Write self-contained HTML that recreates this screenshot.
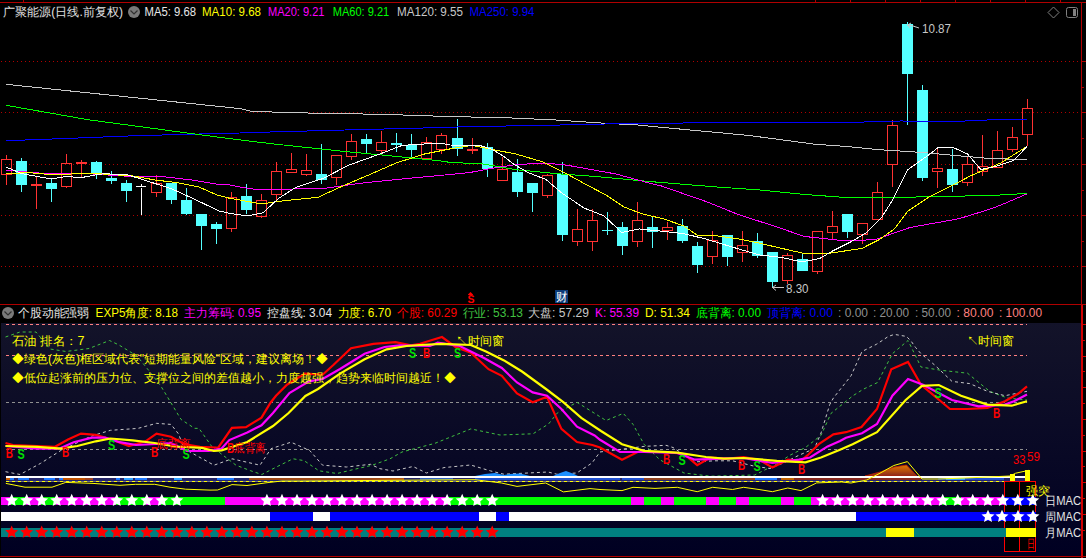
<!DOCTYPE html>
<html><head><meta charset="utf-8">
<style>
html,body{margin:0;padding:0;background:#000;}
body{width:1086px;height:558px;overflow:hidden;position:relative;}
svg{position:absolute;left:0;top:0;display:block;}
</style></head><body>
<svg width="1086" height="558" viewBox="0 0 1086 558">
<line x1="1" y1="61.5" x2="1080" y2="61.5" stroke="#b00000" stroke-width="1" stroke-dasharray="1,3"/>
<line x1="1" y1="112.5" x2="1080" y2="112.5" stroke="#b00000" stroke-width="1" stroke-dasharray="1,3"/>
<line x1="1" y1="164.5" x2="1080" y2="164.5" stroke="#b00000" stroke-width="1" stroke-dasharray="1,3"/>
<line x1="1" y1="215.5" x2="1080" y2="215.5" stroke="#b00000" stroke-width="1" stroke-dasharray="1,3"/>
<line x1="1" y1="266.5" x2="1080" y2="266.5" stroke="#b00000" stroke-width="1" stroke-dasharray="1,3"/>
<g shape-rendering="crispEdges">
<rect x="6" y="155" width="1" height="4" fill="#ff3232"/>
<rect x="6" y="174" width="1" height="11" fill="#ff3232"/>
<rect x="1.5" y="159.5" width="10" height="15" fill="none" stroke="#ff3232"/>
<rect x="21" y="158" width="1" height="34" fill="#54ffff"/>
<rect x="16" y="161" width="11" height="24" fill="#54ffff"/>
<rect x="36" y="176" width="1" height="8" fill="#ff3232"/>
<rect x="36" y="186" width="1" height="23" fill="#ff3232"/>
<rect x="31" y="184" width="11" height="2" fill="#ff3232"/>
<rect x="51" y="178" width="1" height="24" fill="#54ffff"/>
<rect x="46" y="183" width="11" height="6" fill="#54ffff"/>
<rect x="66" y="154" width="1" height="9" fill="#ff3232"/>
<rect x="66" y="186" width="1" height="2" fill="#ff3232"/>
<rect x="61.5" y="163.5" width="10" height="23" fill="none" stroke="#ff3232"/>
<rect x="81" y="160" width="1" height="2" fill="#ff3232"/>
<rect x="81" y="164" width="1" height="13" fill="#ff3232"/>
<rect x="76" y="162" width="11" height="2" fill="#ff3232"/>
<rect x="96" y="161" width="1" height="18" fill="#54ffff"/>
<rect x="91" y="162" width="11" height="11" fill="#54ffff"/>
<rect x="111" y="171" width="1" height="13" fill="#54ffff"/>
<rect x="106" y="178" width="11" height="3" fill="#54ffff"/>
<rect x="126" y="180" width="1" height="22" fill="#54ffff"/>
<rect x="121" y="183" width="11" height="8" fill="#54ffff"/>
<rect x="141" y="184" width="1" height="2" fill="#ffffff"/>
<rect x="141" y="188" width="1" height="27" fill="#ffffff"/>
<rect x="136" y="186" width="10" height="1" fill="#ffffff"/>
<rect x="156" y="175" width="1" height="8" fill="#ff3232"/>
<rect x="156" y="192" width="1" height="5" fill="#ff3232"/>
<rect x="151.5" y="183.5" width="10" height="9" fill="none" stroke="#ff3232"/>
<rect x="171" y="183" width="1" height="21" fill="#54ffff"/>
<rect x="166" y="183" width="11" height="17" fill="#54ffff"/>
<rect x="186" y="188" width="1" height="27" fill="#54ffff"/>
<rect x="181" y="200" width="11" height="14" fill="#54ffff"/>
<rect x="201" y="214" width="1" height="36" fill="#54ffff"/>
<rect x="196" y="214" width="11" height="12" fill="#54ffff"/>
<rect x="216" y="222" width="1" height="22" fill="#54ffff"/>
<rect x="211" y="224" width="11" height="5" fill="#54ffff"/>
<rect x="231" y="192" width="1" height="5" fill="#ff3232"/>
<rect x="231" y="228" width="1" height="4" fill="#ff3232"/>
<rect x="226.5" y="197.5" width="10" height="31" fill="none" stroke="#ff3232"/>
<rect x="246" y="184" width="1" height="30" fill="#54ffff"/>
<rect x="241" y="196" width="11" height="14" fill="#54ffff"/>
<rect x="261" y="194" width="1" height="6" fill="#ff3232"/>
<rect x="261" y="216" width="1" height="2" fill="#ff3232"/>
<rect x="256.5" y="200.5" width="10" height="16" fill="none" stroke="#ff3232"/>
<rect x="276" y="162" width="1" height="9" fill="#ff3232"/>
<rect x="276" y="194" width="1" height="8" fill="#ff3232"/>
<rect x="271.5" y="171.5" width="10" height="23" fill="none" stroke="#ff3232"/>
<rect x="291" y="153" width="1" height="16" fill="#ff3232"/>
<rect x="291" y="172" width="1" height="1" fill="#ff3232"/>
<rect x="286.5" y="169.5" width="10" height="3" fill="none" stroke="#ff3232"/>
<rect x="306" y="154" width="1" height="16" fill="#ff3232"/>
<rect x="306" y="174" width="1" height="2" fill="#ff3232"/>
<rect x="301.5" y="170.5" width="10" height="4" fill="none" stroke="#ff3232"/>
<rect x="321" y="144" width="1" height="40" fill="#54ffff"/>
<rect x="316" y="174" width="11" height="6" fill="#54ffff"/>
<rect x="336" y="155" width="1" height="1" fill="#ff3232"/>
<rect x="336" y="177" width="1" height="8" fill="#ff3232"/>
<rect x="331.5" y="155.5" width="10" height="22" fill="none" stroke="#ff3232"/>
<rect x="351" y="134" width="1" height="7" fill="#ff3232"/>
<rect x="351" y="156" width="1" height="4" fill="#ff3232"/>
<rect x="346.5" y="141.5" width="10" height="15" fill="none" stroke="#ff3232"/>
<rect x="366" y="134" width="1" height="19" fill="#54ffff"/>
<rect x="361" y="139" width="11" height="5" fill="#54ffff"/>
<rect x="381" y="131" width="1" height="11" fill="#ff3232"/>
<rect x="381" y="150" width="1" height="4" fill="#ff3232"/>
<rect x="376.5" y="142.5" width="10" height="8" fill="none" stroke="#ff3232"/>
<rect x="396" y="133" width="1" height="19" fill="#54ffff"/>
<rect x="391" y="143" width="11" height="2" fill="#54ffff"/>
<rect x="411" y="134" width="1" height="24" fill="#54ffff"/>
<rect x="406" y="145" width="11" height="5" fill="#54ffff"/>
<rect x="426" y="137" width="1" height="5" fill="#ff3232"/>
<rect x="426" y="158" width="1" height="1" fill="#ff3232"/>
<rect x="421.5" y="142.5" width="10" height="16" fill="none" stroke="#ff3232"/>
<rect x="441" y="133" width="1" height="2" fill="#ff3232"/>
<rect x="441" y="149" width="1" height="5" fill="#ff3232"/>
<rect x="436.5" y="135.5" width="10" height="14" fill="none" stroke="#ff3232"/>
<rect x="457" y="119" width="1" height="37" fill="#54ffff"/>
<rect x="452" y="138" width="11" height="11" fill="#54ffff"/>
<rect x="472" y="138" width="1" height="11" fill="#ff3232"/>
<rect x="472" y="151" width="1" height="3" fill="#ff3232"/>
<rect x="467" y="149" width="11" height="2" fill="#ff3232"/>
<rect x="487" y="143" width="1" height="34" fill="#54ffff"/>
<rect x="482" y="147" width="11" height="22" fill="#54ffff"/>
<rect x="502" y="157" width="1" height="12" fill="#ff3232"/>
<rect x="502" y="180" width="1" height="1" fill="#ff3232"/>
<rect x="497.5" y="169.5" width="10" height="11" fill="none" stroke="#ff3232"/>
<rect x="517" y="159" width="1" height="38" fill="#54ffff"/>
<rect x="512" y="172" width="11" height="20" fill="#54ffff"/>
<rect x="532" y="183" width="1" height="29" fill="#54ffff"/>
<rect x="527" y="183" width="11" height="10" fill="#54ffff"/>
<rect x="547" y="174" width="1" height="1" fill="#ff3232"/>
<rect x="547" y="195" width="1" height="3" fill="#ff3232"/>
<rect x="542.5" y="175.5" width="10" height="20" fill="none" stroke="#ff3232"/>
<rect x="562" y="162" width="1" height="79" fill="#54ffff"/>
<rect x="557" y="174" width="11" height="61" fill="#54ffff"/>
<rect x="577" y="209" width="1" height="20" fill="#ff3232"/>
<rect x="577" y="241" width="1" height="5" fill="#ff3232"/>
<rect x="572.5" y="229.5" width="10" height="12" fill="none" stroke="#ff3232"/>
<rect x="592" y="209" width="1" height="11" fill="#ff3232"/>
<rect x="592" y="241" width="1" height="10" fill="#ff3232"/>
<rect x="587.5" y="220.5" width="10" height="21" fill="none" stroke="#ff3232"/>
<rect x="607" y="212" width="1" height="23" fill="#54ffff"/>
<rect x="602" y="230" width="11" height="1" fill="#54ffff"/>
<rect x="622" y="222" width="1" height="33" fill="#54ffff"/>
<rect x="617" y="227" width="11" height="19" fill="#54ffff"/>
<rect x="637" y="202" width="1" height="18" fill="#ff3232"/>
<rect x="637" y="241" width="1" height="6" fill="#ff3232"/>
<rect x="632.5" y="220.5" width="10" height="21" fill="none" stroke="#ff3232"/>
<rect x="652" y="217" width="1" height="31" fill="#54ffff"/>
<rect x="647" y="227" width="11" height="5" fill="#54ffff"/>
<rect x="667" y="222" width="1" height="5" fill="#ff3232"/>
<rect x="667" y="230" width="1" height="10" fill="#ff3232"/>
<rect x="662.5" y="227.5" width="10" height="3" fill="none" stroke="#ff3232"/>
<rect x="682" y="219" width="1" height="24" fill="#54ffff"/>
<rect x="677" y="226" width="11" height="15" fill="#54ffff"/>
<rect x="697" y="242" width="1" height="31" fill="#54ffff"/>
<rect x="692" y="246" width="11" height="19" fill="#54ffff"/>
<rect x="712" y="231" width="1" height="9" fill="#ff3232"/>
<rect x="712" y="256" width="1" height="8" fill="#ff3232"/>
<rect x="707.5" y="240.5" width="10" height="16" fill="none" stroke="#ff3232"/>
<rect x="727" y="235" width="1" height="31" fill="#54ffff"/>
<rect x="722" y="235" width="11" height="22" fill="#54ffff"/>
<rect x="742" y="231" width="1" height="14" fill="#ff3232"/>
<rect x="742" y="252" width="1" height="10" fill="#ff3232"/>
<rect x="737.5" y="245.5" width="10" height="7" fill="none" stroke="#ff3232"/>
<rect x="757" y="233" width="1" height="25" fill="#54ffff"/>
<rect x="752" y="241" width="11" height="15" fill="#54ffff"/>
<rect x="772" y="252" width="1" height="35" fill="#54ffff"/>
<rect x="767" y="252" width="11" height="30" fill="#54ffff"/>
<rect x="787" y="253" width="1" height="2" fill="#ff3232"/>
<rect x="787" y="280" width="1" height="4" fill="#ff3232"/>
<rect x="782.5" y="255.5" width="10" height="25" fill="none" stroke="#ff3232"/>
<rect x="802" y="253" width="1" height="18" fill="#54ffff"/>
<rect x="797" y="259" width="11" height="12" fill="#54ffff"/>
<rect x="817" y="231" width="1" height="1" fill="#ff3232"/>
<rect x="817" y="271" width="1" height="3" fill="#ff3232"/>
<rect x="812.5" y="231.5" width="10" height="40" fill="none" stroke="#ff3232"/>
<rect x="832" y="211" width="1" height="15" fill="#ff3232"/>
<rect x="832" y="232" width="1" height="7" fill="#ff3232"/>
<rect x="827.5" y="226.5" width="10" height="6" fill="none" stroke="#ff3232"/>
<rect x="847" y="214" width="1" height="24" fill="#54ffff"/>
<rect x="842" y="214" width="11" height="18" fill="#54ffff"/>
<rect x="862" y="223" width="1" height="1" fill="#ff3232"/>
<rect x="862" y="234" width="1" height="10" fill="#ff3232"/>
<rect x="857.5" y="223.5" width="10" height="11" fill="none" stroke="#ff3232"/>
<rect x="877" y="182" width="1" height="10" fill="#ff3232"/>
<rect x="877" y="219" width="1" height="1" fill="#ff3232"/>
<rect x="872.5" y="192.5" width="10" height="27" fill="none" stroke="#ff3232"/>
<rect x="892" y="120" width="1" height="5" fill="#ff3232"/>
<rect x="892" y="164" width="1" height="23" fill="#ff3232"/>
<rect x="887.5" y="125.5" width="10" height="39" fill="none" stroke="#ff3232"/>
<rect x="907" y="22" width="1" height="103" fill="#54ffff"/>
<rect x="902" y="24" width="11" height="50" fill="#54ffff"/>
<rect x="922" y="85" width="1" height="96" fill="#54ffff"/>
<rect x="917" y="90" width="11" height="88" fill="#54ffff"/>
<rect x="937" y="148" width="1" height="20" fill="#ff3232"/>
<rect x="937" y="171" width="1" height="17" fill="#ff3232"/>
<rect x="932.5" y="168.5" width="10" height="3" fill="none" stroke="#ff3232"/>
<rect x="952" y="149" width="1" height="43" fill="#54ffff"/>
<rect x="947" y="169" width="11" height="16" fill="#54ffff"/>
<rect x="967" y="156" width="1" height="8" fill="#ff3232"/>
<rect x="967" y="182" width="1" height="4" fill="#ff3232"/>
<rect x="962.5" y="164.5" width="10" height="18" fill="none" stroke="#ff3232"/>
<rect x="982" y="135" width="1" height="31" fill="#ff3232"/>
<rect x="982" y="171" width="1" height="5" fill="#ff3232"/>
<rect x="977.5" y="166.5" width="10" height="5" fill="none" stroke="#ff3232"/>
<rect x="997" y="131" width="1" height="19" fill="#ff3232"/>
<rect x="997" y="167" width="1" height="1" fill="#ff3232"/>
<rect x="992.5" y="150.5" width="10" height="17" fill="none" stroke="#ff3232"/>
<rect x="1012" y="127" width="1" height="10" fill="#ff3232"/>
<rect x="1012" y="149" width="1" height="3" fill="#ff3232"/>
<rect x="1007.5" y="137.5" width="10" height="12" fill="none" stroke="#ff3232"/>
<rect x="1027" y="99" width="1" height="9" fill="#ff3232"/>
<rect x="1027" y="134" width="1" height="12" fill="#ff3232"/>
<rect x="1022.5" y="108.5" width="10" height="26" fill="none" stroke="#ff3232"/>
</g>
<g fill="none" stroke-width="1" shape-rendering="crispEdges">
<polyline points="6.0,84.3 240.0,108.6 250.0,111.0 285.0,112.6 385.0,114.4 451.0,116.6 505.0,117.7 556.0,120.0 605.0,123.3 638.0,125.0 660.0,127.2 748.4,135.4 814.7,144.2 846.0,146.4 879.0,149.7 923.0,152.5 956.5,155.6 989.6,158.5 1027.0,159.6" stroke="#c8c8c8"/>
<polyline points="6.0,140.7 66.0,138.5 132.6,135.8 199.0,134.0 240.0,133.0 270.0,132.0 345.0,130.0 435.0,127.7 470.0,126.6 538.0,125.5 605.0,124.0 660.0,123.2 792.6,122.1 846.0,122.5 901.0,121.0 956.5,121.4 1005.0,119.2 1027.0,119.2" stroke="#0000ff"/>
<polyline points="6.0,105.3 88.0,119.7 230.0,138.7 274.0,144.0 340.0,151.0 396.0,156.4 440.0,160.8 450.0,162.4 483.0,164.0 516.0,169.7 560.5,174.0 593.6,176.3 650.5,181.6 717.0,187.0 760.0,190.0 780.0,192.0 804.0,194.4 848.0,197.7 901.0,197.7 923.0,196.7 989.6,195.6 1027.0,193.4" stroke="#00ff00"/>
<polyline points="6.0,170.0 33.0,172.6 55.0,174.0 88.0,173.7 133.0,176.6 166.0,177.0 192.0,180.0 221.0,184.8 230.0,185.0 240.0,187.0 256.5,189.6 323.0,188.5 362.6,183.0 407.0,178.5 450.0,174.5 470.0,172.5 490.0,168.6 516.0,164.6 545.0,163.0 567.0,165.2 616.0,174.0 649.0,183.0 661.5,186.0 690.0,196.0 706.0,201.5 739.0,214.8 760.0,221.5 780.0,228.0 804.0,236.4 844.0,240.8 875.0,239.7 910.0,227.5 959.0,218.7 989.6,209.3 1000.0,205.4 1027.0,193.9" stroke="#ff00ff"/>
<polyline points="6.0,173.7 29.0,172.6 55.0,175.0 88.0,173.0 133.0,176.0 155.0,180.0 177.0,182.6 199.0,187.0 217.0,195.0 230.0,198.4 240.0,200.0 261.0,204.0 285.0,200.6 318.0,197.3 340.5,187.0 371.0,174.0 396.0,163.0 424.5,154.0 451.0,148.7 472.0,145.4 494.0,149.8 516.0,154.0 543.0,162.0 567.0,174.0 587.0,185.0 606.0,195.0 624.0,207.0 641.7,213.7 663.8,219.0 683.6,225.8 697.0,235.0 716.8,235.8 739.0,239.0 761.0,243.5 780.0,248.0 802.0,253.0 824.0,254.0 861.7,248.5 879.0,239.7 894.8,228.6 908.0,211.0 928.0,197.7 959.0,182.0 969.8,176.2 1000.7,163.0 1027.0,146.4" stroke="#ffff00"/>
<polyline points="6.0,167.0 22.0,173.7 51.0,179.0 66.0,176.6 82.0,177.5 95.0,175.0 104.0,173.7 128.0,175.0 141.0,179.0 159.0,184.8 172.0,189.0 192.0,198.0 219.0,211.0 230.0,213.4 247.7,216.0 263.0,212.8 278.6,198.4 296.0,187.3 323.0,178.5 349.0,165.0 380.0,154.0 402.0,145.4 440.0,143.0 450.0,145.0 472.0,145.5 481.5,146.0 492.0,149.4 503.0,155.8 514.0,164.4 529.0,173.0 546.0,179.5 561.0,192.4 584.0,208.0 604.0,215.9 621.8,232.5 639.4,229.0 663.8,231.4 683.6,233.6 705.7,239.0 727.8,245.7 750.0,252.3 760.0,255.0 780.0,257.2 802.0,261.8 819.7,258.5 833.0,250.7 850.6,242.0 866.0,233.0 881.5,217.6 892.6,200.0 907.9,169.6 930.0,154.0 938.8,147.0 952.0,147.0 967.5,154.0 980.8,169.6 996.3,166.2 1014.0,160.3 1027.0,146.4" stroke="#ffffff"/>
</g>
<defs><linearGradient id="bg" x1="0" y1="0" x2="0" y2="1"><stop offset="0" stop-color="#131329"/><stop offset="1" stop-color="#000022"/></linearGradient></defs>
<rect x="1" y="323" width="1080" height="233" fill="url(#bg)"/>
<line x1="6" y1="324.5" x2="1027" y2="324.5" stroke="#ff8080" stroke-dasharray="3,3"/>
<line x1="6" y1="355.5" x2="1027" y2="355.5" stroke="#ff8080" stroke-dasharray="3,3"/>
<line x1="6" y1="402.5" x2="1027" y2="402.5" stroke="#909090" stroke-dasharray="3,3"/>
<line x1="6" y1="449.5" x2="1027" y2="449.5" stroke="#909090" stroke-dasharray="3,3"/>
<polyline points="5.5,337.0 20.0,332.0 36.0,332.0 50.0,349.0 66.0,351.5 89.0,348.5 109.5,340.5 119.0,345.0 137.0,356.0 150.0,372.0 161.0,386.3 181.0,419.4 194.5,428.3 199.0,428.4 212.0,446.8 236.0,465.2 250.8,470.8 261.8,474.5 280.0,465.2 293.0,458.8 304.0,460.6 319.0,470.8 337.0,473.5 355.7,469.0 372.3,465.2 390.0,458.8 402.0,452.0 435.0,443.3 470.8,428.9 500.0,435.0 533.0,433.8 548.6,423.9 557.5,412.8 577.0,402.3 606.0,420.5 623.3,413.4 633.0,424.3 644.0,444.2 659.7,459.7 684.0,473.0 710.5,476.2 754.7,475.0 776.8,464.0 790.0,455.2 805.5,447.5 821.0,435.4 831.0,413.4 853.0,395.7 863.7,389.0 877.6,382.5 892.4,353.7 908.0,340.5 921.0,367.0 941.0,370.3 967.5,373.2 989.6,391.3 1007.3,398.0 1027.0,400.0" fill="none" stroke="#40c040" stroke-dasharray="3,3"/>
<polyline points="5.5,471.7 20.0,474.5 40.5,463.4 60.8,450.5 92.0,435.8 110.5,430.3 138.0,428.4 156.5,423.3 171.0,424.4 178.6,434.0 184.0,448.7 195.5,455.0 214.0,465.2 232.0,458.8 260.0,465.2 271.0,448.7 291.0,442.2 309.7,450.5 322.6,465.2 346.5,467.0 370.5,464.3 380.0,468.7 393.0,471.0 413.0,466.5 426.4,473.0 444.0,467.6 470.6,465.0 490.5,470.9 503.8,474.2 548.0,472.0 556.8,474.2 576.7,473.0 592.0,463.0 600.0,452.0 644.0,446.4 666.0,445.3 673.0,447.5 695.0,461.9 715.0,460.8 732.6,460.8 754.7,466.3 770.0,468.5 783.4,463.0 799.0,455.2 814.4,448.6 821.0,433.0 829.8,404.4 833.4,398.0 851.0,375.8 862.0,351.5 876.4,344.3 882.4,340.4 888.4,336.4 894.4,334.4 906.4,336.4 911.0,341.0 915.6,347.5 921.0,353.7 934.4,364.8 952.0,381.4 969.8,383.6 987.4,391.3 1005.0,395.7 1027.0,391.3" fill="none" stroke="#c8c8c8" stroke-dasharray="3,3"/>
<defs><linearGradient id="og" x1="0" y1="0" x2="0" y2="1"><stop offset="0" stop-color="#e07800"/><stop offset="0.6" stop-color="#b04810"/><stop offset="1" stop-color="#882820"/></linearGradient></defs>
<polygon points="865,476 880,472 894,467 906.5,465 917,476" fill="url(#og)" stroke="#c02000" stroke-width="0.8"/>
<polygon points="475,476 485,474 495,473 504,475 510,474 520,473.5 530,476" fill="#1e90ff"/>
<polygon points="553,476 560,473 566,471 574,474 578,476" fill="#1e90ff"/>
<rect x="6" y="476" width="1020" height="2" fill="#ffffff"/>
<rect x="6" y="478" width="1020" height="3" fill="#242468"/>
<rect x="6" y="481" width="1020" height="1" fill="#707090"/>
<rect x="6" y="478" width="4" height="2" fill="#c85a00"/>
<rect x="10" y="478" width="4" height="2" fill="#1e78ff"/>
<rect x="18" y="478" width="11" height="2" fill="#1e78ff"/>
<rect x="44" y="478" width="11" height="2" fill="#1e78ff"/>
<rect x="59" y="478" width="4" height="2" fill="#1e78ff"/>
<rect x="63" y="478" width="22" height="2" fill="#c05000"/>
<rect x="85" y="478" width="8" height="2" fill="#a04020"/>
<rect x="116" y="478" width="4" height="2" fill="#1e78ff"/>
<rect x="124" y="478" width="9" height="2" fill="#30a0ff"/>
<rect x="135" y="478" width="12" height="2" fill="#1e78ff"/>
<rect x="174" y="478" width="8" height="2" fill="#30a0ff"/>
<rect x="217" y="478" width="17" height="2" fill="#1e78ff"/>
<rect x="249" y="478" width="131" height="2" fill="#a04818"/>
<rect x="380" y="478" width="24" height="2" fill="#b05010"/>
<rect x="420" y="478" width="33" height="2" fill="#3060c0"/>
<rect x="475" y="478" width="145" height="2" fill="#2050d0"/>
<rect x="622" y="478" width="22" height="2" fill="#2050d0"/>
<rect x="644" y="478" width="111" height="2" fill="#904020"/>
<rect x="755" y="478" width="22" height="2" fill="#1e78ff"/>
<rect x="781" y="478" width="13" height="2" fill="#c06000"/>
<rect x="794" y="478" width="127" height="2" fill="#882820"/>
<rect x="938" y="478" width="66" height="2" fill="#2050d0"/>
<rect x="946" y="478" width="19" height="2" fill="#30a0ff"/>
<line x1="6" y1="481.5" x2="1027" y2="481.5" stroke="#ffff00" stroke-dasharray="3,3"/>
<polyline points="5.8,483.4 25.0,487.2 52.0,487.2 65.8,482.4 93.0,483.4 120.0,485.3 135.4,484.3 154.7,484.3 170.0,487.2 185.7,489.2 210.0,490.1 217.6,490.0 232.0,484.6 247.0,485.5 267.0,482.7 282.0,481.0 300.5,481.0 475.0,479.7 501.5,483.0 517.0,486.4 545.7,483.0 563.4,491.9 590.0,488.6 600.0,489.5 622.0,490.6 633.0,487.3 655.0,488.4 677.3,487.3 697.2,491.7 712.7,487.3 732.6,489.5 743.6,487.3 759.0,489.5 772.4,491.7 787.8,488.0 801.0,490.6 816.6,482.9 841.6,482.0 851.0,483.0 866.8,480.0 880.0,473.2 893.8,465.5 907.4,461.6 922.0,479.0 938.3,479.0 965.4,478.0 1010.0,476.0 1015.7,473.2 1029.0,470.3" fill="none" stroke="#ffff00"/>
<rect x="1010" y="474" width="5" height="7" fill="#ffff00"/>
<rect x="1025" y="470" width="5" height="11" fill="#ffff00"/>
<polyline points="5.5,443.0 13.0,445.0 55.0,446.8 68.0,439.5 81.0,433.6 95.8,434.9 114.0,440.4 129.0,446.0 145.5,441.3 156.5,433.6 171.0,436.7 184.0,444.0 200.0,446.8 216.0,447.5 218.0,448.0 231.9,427.9 246.0,427.2 261.5,417.6 270.5,402.7 276.0,395.7 287.0,384.7 305.0,373.6 322.6,374.7 333.6,364.8 351.0,348.2 373.4,343.8 395.5,342.2 411.0,345.3 420.0,343.8 442.0,337.0 455.4,347.0 470.8,352.6 488.5,369.2 501.8,375.8 517.0,393.5 532.7,402.3 547.0,396.8 561.4,428.9 577.0,442.0 592.4,445.0 600.0,447.5 622.0,459.7 637.6,452.0 666.0,452.0 684.0,454.0 697.2,465.2 710.5,457.5 728.0,458.6 743.6,457.0 759.0,459.7 772.4,467.4 787.8,459.7 801.0,460.8 807.7,455.2 818.8,444.2 833.4,434.4 846.0,432.2 861.5,427.0 877.0,409.0 891.3,369.2 908.0,362.0 921.0,384.7 950.0,409.0 967.5,409.0 987.4,407.9 1005.0,401.2 1018.4,393.5 1027.0,386.4" fill="none" stroke="#ff0000" stroke-width="2.2" stroke-linejoin="miter"/>
<polyline points="5.5,446.0 37.0,448.7 59.0,448.7 73.7,442.2 92.0,437.6 105.0,437.6 119.7,442.2 136.0,445.0 156.5,444.0 171.0,443.0 186.8,451.0 208.7,451.0 221.6,448.5 229.3,440.1 247.3,432.4 261.5,425.3 273.0,413.0 289.4,393.0 309.0,381.4 322.6,379.0 340.0,369.0 364.6,353.7 384.5,347.0 400.0,345.3 430.0,346.0 437.7,342.7 459.8,346.0 484.0,358.0 501.8,368.0 517.0,382.5 532.7,392.4 547.0,395.7 561.4,409.0 577.0,426.7 594.6,435.5 600.0,439.8 620.0,452.0 644.0,452.0 677.3,453.0 695.0,459.7 721.5,458.6 743.6,458.0 772.4,463.0 799.0,459.7 810.0,457.5 827.6,446.4 840.0,441.0 846.0,437.7 862.0,433.3 877.0,424.0 892.4,395.7 908.0,379.0 923.0,384.7 952.0,400.0 978.6,406.3 1005.0,404.6 1014.0,401.2 1027.0,394.6" fill="none" stroke="#ff00ff" stroke-width="2.2" stroke-linejoin="miter"/>
<polyline points="5.5,446.0 37.0,446.8 60.8,448.7 77.3,446.0 95.8,441.3 110.5,438.5 132.6,440.4 154.7,443.0 175.0,446.5 202.0,447.9 213.8,451.0 221.6,450.4 247.3,442.0 273.0,426.0 288.6,413.0 305.4,396.0 318.0,389.0 340.0,373.6 364.6,359.3 386.7,349.3 406.6,346.0 420.0,345.0 442.0,343.8 470.8,345.0 486.0,351.5 504.0,360.4 522.0,371.5 546.0,389.0 563.6,402.3 581.3,417.8 601.0,431.0 622.0,444.2 644.0,450.8 677.3,452.6 706.0,457.0 723.8,458.6 743.6,458.0 776.8,460.8 805.5,462.3 821.0,457.5 840.0,449.7 852.6,444.3 877.0,432.2 905.7,400.0 922.0,385.8 938.8,385.0 961.0,395.7 987.4,404.6 1011.7,405.7 1027.0,401.2" fill="none" stroke="#ffff00" stroke-width="2.2" stroke-linejoin="miter"/>
<rect x="1004" y="481" width="32" height="71" fill="#000000"/>
<rect x="1004.5" y="481.5" width="31" height="70" fill="none" stroke="#ff0000"/>
<rect x="1019" y="481" width="1" height="71" fill="#ff0000"/>
<rect x="1" y="497" width="1003" height="8" fill="#ff00ff"/>
<rect x="11" y="497" width="15" height="8" fill="#00ff00"/>
<rect x="41" y="497" width="15" height="8" fill="#00ff00"/>
<rect x="116" y="497" width="30" height="8" fill="#00ff00"/>
<rect x="161" y="497" width="64" height="8" fill="#00ff00"/>
<rect x="448" y="497" width="183" height="8" fill="#00ff00"/>
<rect x="644" y="497" width="17" height="8" fill="#00ff00"/>
<rect x="674" y="497" width="32" height="8" fill="#00ff00"/>
<rect x="719" y="497" width="17" height="8" fill="#00ff00"/>
<rect x="749" y="497" width="32" height="8" fill="#00ff00"/>
<rect x="794" y="497" width="17" height="8" fill="#00ff00"/>
<rect x="942" y="497" width="19" height="8" fill="#00ff00"/>
<rect x="1004" y="497" width="32" height="8" fill="#0000ff"/>
<polygon points="11.7,493.8 13.5,498.0 18.1,498.5 14.7,501.6 15.6,506.1 11.7,503.8 7.7,506.1 8.6,501.6 5.2,498.5 9.8,498.0" fill="#ffffff"/>
<polygon points="26.7,493.8 28.5,498.0 33.1,498.5 29.7,501.6 30.7,506.1 26.7,503.8 22.7,506.1 23.6,501.6 20.2,498.5 24.8,498.0" fill="#ffffff"/>
<polygon points="41.7,493.8 43.6,498.0 48.2,498.5 44.7,501.6 45.7,506.1 41.7,503.8 37.7,506.1 38.6,501.6 35.2,498.5 39.8,498.0" fill="#ffffff"/>
<polygon points="56.7,493.8 58.6,498.0 63.2,498.5 59.7,501.6 60.7,506.1 56.7,503.8 52.7,506.1 53.7,501.6 50.2,498.5 54.8,498.0" fill="#ffffff"/>
<polygon points="71.7,493.8 73.6,498.0 78.2,498.5 74.8,501.6 75.7,506.1 71.7,503.8 67.7,506.1 68.7,501.6 65.3,498.5 69.8,498.0" fill="#ffffff"/>
<polygon points="86.7,493.8 88.6,498.0 93.2,498.5 89.8,501.6 90.7,506.1 86.7,503.8 82.7,506.1 83.7,501.6 80.3,498.5 84.9,498.0" fill="#ffffff"/>
<polygon points="101.8,493.8 103.6,498.0 108.2,498.5 104.8,501.6 105.7,506.1 101.8,503.8 97.8,506.1 98.7,501.6 95.3,498.5 99.9,498.0" fill="#ffffff"/>
<polygon points="116.8,493.8 118.6,498.0 123.2,498.5 119.8,501.6 120.8,506.1 116.8,503.8 112.8,506.1 113.7,501.6 110.3,498.5 114.9,498.0" fill="#ffffff"/>
<polygon points="131.8,493.8 133.7,498.0 138.3,498.5 134.8,501.6 135.8,506.1 131.8,503.8 127.8,506.1 128.7,501.6 125.3,498.5 129.9,498.0" fill="#ffffff"/>
<polygon points="146.8,493.8 148.7,498.0 153.3,498.5 149.8,501.6 150.8,506.1 146.8,503.8 142.8,506.1 143.8,501.6 140.3,498.5 144.9,498.0" fill="#ffffff"/>
<polygon points="161.8,493.8 163.7,498.0 168.3,498.5 164.9,501.6 165.8,506.1 161.8,503.8 157.8,506.1 158.8,501.6 155.4,498.5 159.9,498.0" fill="#ffffff"/>
<polygon points="176.8,493.8 178.7,498.0 183.3,498.5 179.9,501.6 180.8,506.1 176.8,503.8 172.8,506.1 173.8,501.6 170.4,498.5 175.0,498.0" fill="#ffffff"/>
<polygon points="266.9,493.8 268.8,498.0 273.4,498.5 270.0,501.6 270.9,506.1 266.9,503.8 262.9,506.1 263.9,501.6 260.5,498.5 265.1,498.0" fill="#ffffff"/>
<polygon points="282.0,493.8 283.8,498.0 288.4,498.5 285.0,501.6 286.0,506.1 282.0,503.8 278.0,506.1 278.9,501.6 275.5,498.5 280.1,498.0" fill="#ffffff"/>
<polygon points="297.0,493.8 298.9,498.0 303.4,498.5 300.0,501.6 301.0,506.1 297.0,503.8 293.0,506.1 293.9,501.6 290.5,498.5 295.1,498.0" fill="#ffffff"/>
<polygon points="312.0,493.8 313.9,498.0 318.5,498.5 315.0,501.6 316.0,506.1 312.0,503.8 308.0,506.1 309.0,501.6 305.5,498.5 310.1,498.0" fill="#ffffff"/>
<polygon points="327.0,493.8 328.9,498.0 333.5,498.5 330.0,501.6 331.0,506.1 327.0,503.8 323.0,506.1 324.0,501.6 320.5,498.5 325.1,498.0" fill="#ffffff"/>
<polygon points="342.0,493.8 343.9,498.0 348.5,498.5 345.1,501.6 346.0,506.1 342.0,503.8 338.0,506.1 339.0,501.6 335.6,498.5 340.1,498.0" fill="#ffffff"/>
<polygon points="357.0,493.8 358.9,498.0 363.5,498.5 360.1,501.6 361.0,506.1 357.0,503.8 353.0,506.1 354.0,501.6 350.6,498.5 355.2,498.0" fill="#ffffff"/>
<polygon points="372.1,493.8 373.9,498.0 378.5,498.5 375.1,501.6 376.1,506.1 372.1,503.8 368.1,506.1 369.0,501.6 365.6,498.5 370.2,498.0" fill="#ffffff"/>
<polygon points="387.1,493.8 389.0,498.0 393.5,498.5 390.1,501.6 391.1,506.1 387.1,503.8 383.1,506.1 384.0,501.6 380.6,498.5 385.2,498.0" fill="#ffffff"/>
<polygon points="402.1,493.8 404.0,498.0 408.6,498.5 405.1,501.6 406.1,506.1 402.1,503.8 398.1,506.1 399.1,501.6 395.6,498.5 400.2,498.0" fill="#ffffff"/>
<polygon points="417.1,493.8 419.0,498.0 423.6,498.5 420.1,501.6 421.1,506.1 417.1,503.8 413.1,506.1 414.1,501.6 410.6,498.5 415.2,498.0" fill="#ffffff"/>
<polygon points="432.1,493.8 434.0,498.0 438.6,498.5 435.2,501.6 436.1,506.1 432.1,503.8 428.1,506.1 429.1,501.6 425.7,498.5 430.2,498.0" fill="#ffffff"/>
<polygon points="447.1,493.8 449.0,498.0 453.6,498.5 450.2,501.6 451.1,506.1 447.1,503.8 443.1,506.1 444.1,501.6 440.7,498.5 445.3,498.0" fill="#ffffff"/>
<polygon points="462.2,493.8 464.0,498.0 468.6,498.5 465.2,501.6 466.2,506.1 462.2,503.8 458.2,506.1 459.1,501.6 455.7,498.5 460.3,498.0" fill="#ffffff"/>
<polygon points="477.2,493.8 479.1,498.0 483.6,498.5 480.2,501.6 481.2,506.1 477.2,503.8 473.2,506.1 474.1,501.6 470.7,498.5 475.3,498.0" fill="#ffffff"/>
<polygon points="492.2,493.8 494.1,498.0 498.7,498.5 495.2,501.6 496.2,506.1 492.2,503.8 488.2,506.1 489.2,501.6 485.7,498.5 490.3,498.0" fill="#ffffff"/>
<polygon points="822.6,493.8 824.4,498.0 829.0,498.5 825.6,501.6 826.6,506.1 822.6,503.8 818.6,506.1 819.5,501.6 816.1,498.5 820.7,498.0" fill="#ffffff"/>
<polygon points="837.6,493.8 839.5,498.0 844.1,498.5 840.6,501.6 841.6,506.1 837.6,503.8 833.6,506.1 834.5,501.6 831.1,498.5 835.7,498.0" fill="#ffffff"/>
<polygon points="852.6,493.8 854.5,498.0 859.1,498.5 855.6,501.6 856.6,506.1 852.6,503.8 848.6,506.1 849.6,501.6 846.1,498.5 850.7,498.0" fill="#ffffff"/>
<polygon points="867.6,493.8 869.5,498.0 874.1,498.5 870.7,501.6 871.6,506.1 867.6,503.8 863.6,506.1 864.6,501.6 861.2,498.5 865.7,498.0" fill="#ffffff"/>
<polygon points="882.6,493.8 884.5,498.0 889.1,498.5 885.7,501.6 886.6,506.1 882.6,503.8 878.6,506.1 879.6,501.6 876.2,498.5 880.8,498.0" fill="#ffffff"/>
<polygon points="897.7,493.8 899.5,498.0 904.1,498.5 900.7,501.6 901.6,506.1 897.7,503.8 893.7,506.1 894.6,501.6 891.2,498.5 895.8,498.0" fill="#ffffff"/>
<polygon points="912.7,493.8 914.5,498.0 919.1,498.5 915.7,501.6 916.7,506.1 912.7,503.8 908.7,506.1 909.6,501.6 906.2,498.5 910.8,498.0" fill="#ffffff"/>
<polygon points="927.7,493.8 929.6,498.0 934.2,498.5 930.7,501.6 931.7,506.1 927.7,503.8 923.7,506.1 924.6,501.6 921.2,498.5 925.8,498.0" fill="#ffffff"/>
<polygon points="942.7,493.8 944.6,498.0 949.2,498.5 945.7,501.6 946.7,506.1 942.7,503.8 938.7,506.1 939.7,501.6 936.2,498.5 940.8,498.0" fill="#ffffff"/>
<polygon points="957.7,493.8 959.6,498.0 964.2,498.5 960.8,501.6 961.7,506.1 957.7,503.8 953.7,506.1 954.7,501.6 951.3,498.5 955.8,498.0" fill="#ffffff"/>
<polygon points="972.7,493.8 974.6,498.0 979.2,498.5 975.8,501.6 976.7,506.1 972.7,503.8 968.7,506.1 969.7,501.6 966.3,498.5 970.9,498.0" fill="#ffffff"/>
<polygon points="987.8,493.8 989.6,498.0 994.2,498.5 990.8,501.6 991.8,506.1 987.8,503.8 983.8,506.1 984.7,501.6 981.3,498.5 985.9,498.0" fill="#ffffff"/>
<polygon points="1002.8,493.8 1004.7,498.0 1009.2,498.5 1005.8,501.6 1006.8,506.1 1002.8,503.8 998.8,506.1 999.7,501.6 996.3,498.5 1000.9,498.0" fill="#ffffff"/>
<polygon points="1017.8,493.8 1019.7,498.0 1024.3,498.5 1020.8,501.6 1021.8,506.1 1017.8,503.8 1013.8,506.1 1014.7,501.6 1011.3,498.5 1015.9,498.0" fill="#ffffff"/>
<polygon points="1032.8,493.8 1034.7,498.0 1039.3,498.5 1035.8,501.6 1036.8,506.1 1032.8,503.8 1028.8,506.1 1029.8,501.6 1026.3,498.5 1030.9,498.0" fill="#ffffff"/>
<rect x="1" y="512" width="1035" height="9" fill="#ffffff"/>
<rect x="270" y="512" width="43" height="9" fill="#0000ff"/>
<rect x="330" y="512" width="149" height="9" fill="#0000ff"/>
<rect x="496" y="512" width="13" height="9" fill="#0000ff"/>
<rect x="856" y="512" width="180" height="9" fill="#0000ff"/>
<polygon points="988.0,509.8 989.9,514.0 994.5,514.5 991.0,517.6 992.0,522.1 988.0,519.8 984.0,522.1 985.0,517.6 981.5,514.5 986.1,514.0" fill="#ffffff"/>
<polygon points="1002.0,509.8 1003.9,514.0 1008.5,514.5 1005.0,517.6 1006.0,522.1 1002.0,519.8 998.0,522.1 999.0,517.6 995.5,514.5 1000.1,514.0" fill="#ffffff"/>
<polygon points="1018.0,509.8 1019.9,514.0 1024.5,514.5 1021.0,517.6 1022.0,522.1 1018.0,519.8 1014.0,522.1 1015.0,517.6 1011.5,514.5 1016.1,514.0" fill="#ffffff"/>
<polygon points="1033.0,509.8 1034.9,514.0 1039.5,514.5 1036.0,517.6 1037.0,522.1 1033.0,519.8 1029.0,522.1 1030.0,517.6 1026.5,514.5 1031.1,514.0" fill="#ffffff"/>
<rect x="1" y="528" width="1035" height="9" fill="#008080"/>
<rect x="886" y="528" width="28" height="9" fill="#ffff00"/>
<rect x="1006" y="528" width="30" height="9" fill="#ffff00"/>
<polygon points="11.7,525.5 13.5,529.7 18.1,530.2 14.7,533.3 15.6,537.8 11.7,535.5 7.7,537.8 8.6,533.3 5.2,530.2 9.8,529.7" fill="#ff0000"/>
<polygon points="26.7,525.5 28.5,529.7 33.1,530.2 29.7,533.3 30.7,537.8 26.7,535.5 22.7,537.8 23.6,533.3 20.2,530.2 24.8,529.7" fill="#ff0000"/>
<polygon points="41.7,525.5 43.6,529.7 48.2,530.2 44.7,533.3 45.7,537.8 41.7,535.5 37.7,537.8 38.6,533.3 35.2,530.2 39.8,529.7" fill="#ff0000"/>
<polygon points="56.7,525.5 58.6,529.7 63.2,530.2 59.7,533.3 60.7,537.8 56.7,535.5 52.7,537.8 53.7,533.3 50.2,530.2 54.8,529.7" fill="#ff0000"/>
<polygon points="71.7,525.5 73.6,529.7 78.2,530.2 74.8,533.3 75.7,537.8 71.7,535.5 67.7,537.8 68.7,533.3 65.3,530.2 69.8,529.7" fill="#ff0000"/>
<polygon points="86.7,525.5 88.6,529.7 93.2,530.2 89.8,533.3 90.7,537.8 86.7,535.5 82.7,537.8 83.7,533.3 80.3,530.2 84.9,529.7" fill="#ff0000"/>
<polygon points="101.8,525.5 103.6,529.7 108.2,530.2 104.8,533.3 105.7,537.8 101.8,535.5 97.8,537.8 98.7,533.3 95.3,530.2 99.9,529.7" fill="#ff0000"/>
<polygon points="116.8,525.5 118.6,529.7 123.2,530.2 119.8,533.3 120.8,537.8 116.8,535.5 112.8,537.8 113.7,533.3 110.3,530.2 114.9,529.7" fill="#ff0000"/>
<polygon points="131.8,525.5 133.7,529.7 138.3,530.2 134.8,533.3 135.8,537.8 131.8,535.5 127.8,537.8 128.7,533.3 125.3,530.2 129.9,529.7" fill="#ff0000"/>
<polygon points="146.8,525.5 148.7,529.7 153.3,530.2 149.8,533.3 150.8,537.8 146.8,535.5 142.8,537.8 143.8,533.3 140.3,530.2 144.9,529.7" fill="#ff0000"/>
<polygon points="161.8,525.5 163.7,529.7 168.3,530.2 164.9,533.3 165.8,537.8 161.8,535.5 157.8,537.8 158.8,533.3 155.4,530.2 159.9,529.7" fill="#ff0000"/>
<polygon points="176.8,525.5 178.7,529.7 183.3,530.2 179.9,533.3 180.8,537.8 176.8,535.5 172.8,537.8 173.8,533.3 170.4,530.2 175.0,529.7" fill="#ff0000"/>
<polygon points="191.9,525.5 193.7,529.7 198.3,530.2 194.9,533.3 195.9,537.8 191.9,535.5 187.9,537.8 188.8,533.3 185.4,530.2 190.0,529.7" fill="#ff0000"/>
<polygon points="206.9,525.5 208.7,529.7 213.3,530.2 209.9,533.3 210.9,537.8 206.9,535.5 202.9,537.8 203.8,533.3 200.4,530.2 205.0,529.7" fill="#ff0000"/>
<polygon points="221.9,525.5 223.8,529.7 228.4,530.2 224.9,533.3 225.9,537.8 221.9,535.5 217.9,537.8 218.8,533.3 215.4,530.2 220.0,529.7" fill="#ff0000"/>
<polygon points="236.9,525.5 238.8,529.7 243.4,530.2 239.9,533.3 240.9,537.8 236.9,535.5 232.9,537.8 233.9,533.3 230.4,530.2 235.0,529.7" fill="#ff0000"/>
<polygon points="251.9,525.5 253.8,529.7 258.4,530.2 255.0,533.3 255.9,537.8 251.9,535.5 247.9,537.8 248.9,533.3 245.5,530.2 250.0,529.7" fill="#ff0000"/>
<polygon points="266.9,525.5 268.8,529.7 273.4,530.2 270.0,533.3 270.9,537.8 266.9,535.5 262.9,537.8 263.9,533.3 260.5,530.2 265.1,529.7" fill="#ff0000"/>
<polygon points="282.0,525.5 283.8,529.7 288.4,530.2 285.0,533.3 286.0,537.8 282.0,535.5 278.0,537.8 278.9,533.3 275.5,530.2 280.1,529.7" fill="#ff0000"/>
<polygon points="297.0,525.5 298.9,529.7 303.4,530.2 300.0,533.3 301.0,537.8 297.0,535.5 293.0,537.8 293.9,533.3 290.5,530.2 295.1,529.7" fill="#ff0000"/>
<polygon points="312.0,525.5 313.9,529.7 318.5,530.2 315.0,533.3 316.0,537.8 312.0,535.5 308.0,537.8 309.0,533.3 305.5,530.2 310.1,529.7" fill="#ff0000"/>
<polygon points="327.0,525.5 328.9,529.7 333.5,530.2 330.0,533.3 331.0,537.8 327.0,535.5 323.0,537.8 324.0,533.3 320.5,530.2 325.1,529.7" fill="#ff0000"/>
<polygon points="342.0,525.5 343.9,529.7 348.5,530.2 345.1,533.3 346.0,537.8 342.0,535.5 338.0,537.8 339.0,533.3 335.6,530.2 340.1,529.7" fill="#ff0000"/>
<polygon points="357.0,525.5 358.9,529.7 363.5,530.2 360.1,533.3 361.0,537.8 357.0,535.5 353.0,537.8 354.0,533.3 350.6,530.2 355.2,529.7" fill="#ff0000"/>
<polygon points="372.1,525.5 373.9,529.7 378.5,530.2 375.1,533.3 376.1,537.8 372.1,535.5 368.1,537.8 369.0,533.3 365.6,530.2 370.2,529.7" fill="#ff0000"/>
<polygon points="387.1,525.5 389.0,529.7 393.5,530.2 390.1,533.3 391.1,537.8 387.1,535.5 383.1,537.8 384.0,533.3 380.6,530.2 385.2,529.7" fill="#ff0000"/>
<polygon points="402.1,525.5 404.0,529.7 408.6,530.2 405.1,533.3 406.1,537.8 402.1,535.5 398.1,537.8 399.1,533.3 395.6,530.2 400.2,529.7" fill="#ff0000"/>
<polygon points="417.1,525.5 419.0,529.7 423.6,530.2 420.1,533.3 421.1,537.8 417.1,535.5 413.1,537.8 414.1,533.3 410.6,530.2 415.2,529.7" fill="#ff0000"/>
<polygon points="432.1,525.5 434.0,529.7 438.6,530.2 435.2,533.3 436.1,537.8 432.1,535.5 428.1,537.8 429.1,533.3 425.7,530.2 430.2,529.7" fill="#ff0000"/>
<polygon points="447.1,525.5 449.0,529.7 453.6,530.2 450.2,533.3 451.1,537.8 447.1,535.5 443.1,537.8 444.1,533.3 440.7,530.2 445.3,529.7" fill="#ff0000"/>
<polygon points="462.2,525.5 464.0,529.7 468.6,530.2 465.2,533.3 466.2,537.8 462.2,535.5 458.2,537.8 459.1,533.3 455.7,530.2 460.3,529.7" fill="#ff0000"/>
<polygon points="477.2,525.5 479.1,529.7 483.6,530.2 480.2,533.3 481.2,537.8 477.2,535.5 473.2,537.8 474.1,533.3 470.7,530.2 475.3,529.7" fill="#ff0000"/>
<polygon points="492.2,525.5 494.1,529.7 498.7,530.2 495.2,533.3 496.2,537.8 492.2,535.5 488.2,537.8 489.2,533.3 485.7,530.2 490.3,529.7" fill="#ff0000"/>
<rect x="0" y="2" width="1086" height="1" fill="#b00000"/>
<rect x="23" y="0" width="1" height="3" fill="#b00000"/>
<rect x="815" y="0" width="1" height="3" fill="#b00000"/>
<rect x="850" y="0" width="1" height="3" fill="#b00000"/>
<rect x="885" y="0" width="1" height="3" fill="#b00000"/>
<rect x="920" y="0" width="1" height="3" fill="#b00000"/>
<rect x="955" y="0" width="1" height="3" fill="#b00000"/>
<rect x="990" y="0" width="1" height="3" fill="#b00000"/>
<rect x="1025" y="0" width="1" height="3" fill="#b00000"/>
<rect x="1060" y="0" width="1" height="3" fill="#b00000"/>
<rect x="1081" y="2" width="1" height="302" fill="#b00000"/>
<rect x="1081" y="304" width="2" height="254" fill="#d00000"/>
<rect x="1082" y="61" width="4" height="1" fill="#b00000"/>
<rect x="1082" y="112" width="4" height="1" fill="#b00000"/>
<rect x="1082" y="164" width="4" height="1" fill="#b00000"/>
<rect x="1082" y="215" width="4" height="1" fill="#b00000"/>
<rect x="1082" y="266" width="4" height="1" fill="#b00000"/>
<rect x="1082" y="87" width="2" height="1" fill="#b00000"/>
<rect x="1082" y="138" width="2" height="1" fill="#b00000"/>
<rect x="1082" y="190" width="2" height="1" fill="#b00000"/>
<rect x="1082" y="241" width="2" height="1" fill="#b00000"/>
<rect x="0" y="304" width="1086" height="1" fill="#b00000"/>
<rect x="1083" y="324" width="3" height="1" fill="#d00000"/>
<rect x="1083" y="356" width="3" height="1" fill="#d00000"/>
<rect x="1083" y="387" width="3" height="1" fill="#d00000"/>
<rect x="1083" y="419" width="3" height="1" fill="#d00000"/>
<rect x="1083" y="451" width="3" height="1" fill="#d00000"/>
<rect x="1083" y="482" width="3" height="1" fill="#d00000"/>
<rect x="1083" y="514" width="3" height="1" fill="#d00000"/>
<rect x="1083" y="340" width="2" height="1" fill="#d00000"/>
<rect x="1083" y="371" width="2" height="1" fill="#d00000"/>
<rect x="1083" y="403" width="2" height="1" fill="#d00000"/>
<rect x="1083" y="435" width="2" height="1" fill="#d00000"/>
<rect x="1083" y="466" width="2" height="1" fill="#d00000"/>
<rect x="1083" y="498" width="2" height="1" fill="#d00000"/>
<rect x="1083" y="530" width="2" height="1" fill="#d00000"/>
<rect x="0" y="556" width="1086" height="1" fill="#b00000"/>
<circle cx="134" cy="12" r="6" fill="#7a7a7a"/><polyline points="130.5,10.5 134,14 137.5,10.5" fill="none" stroke="#303030" stroke-width="1.2"/>
<circle cx="8" cy="313" r="6" fill="#7a7a7a"/><polyline points="4.5,311.5 8,315 11.5,311.5" fill="none" stroke="#303030" stroke-width="1.2"/>
<polygon points="1053.5,7 1059,12.5 1053.5,18 1048,12.5" fill="none" stroke="#808080" stroke-width="1"/>
<rect x="1066.5" y="7.5" width="11" height="10" rx="2" fill="none" stroke="#808080" stroke-width="1"/>
<rect x="1073" y="9" width="3" height="7" fill="#808080"/>
<g stroke="#c8c8c8" stroke-width="1" fill="none"><polyline points="911,23 907.5,25 910,28"/><polyline points="907.5,25 913,26 919,28"/></g>
<g stroke="#c8c8c8" stroke-width="1" fill="none"><line x1="772" y1="287.5" x2="784" y2="287.5"/><polyline points="776,285 772.5,287.5 776,290.5"/></g>
<g font-family="Liberation Sans, sans-serif">
<text x="3" y="16" fill="#e0e0e0" font-size="12" font-weight="normal" textLength="120" lengthAdjust="spacingAndGlyphs">广聚能源(日线.前复权)</text>
<text x="144.5" y="16" fill="#e8e8e8" font-size="12" font-weight="normal" textLength="51.5" lengthAdjust="spacingAndGlyphs">MA5: 9.68</text>
<text x="202" y="16" fill="#ffff00" font-size="12" font-weight="normal" textLength="59" lengthAdjust="spacingAndGlyphs">MA10: 9.68</text>
<text x="268" y="16" fill="#ff00ff" font-size="12" font-weight="normal" textLength="56.4" lengthAdjust="spacingAndGlyphs">MA20: 9.21</text>
<text x="332.7" y="16" fill="#00ff00" font-size="12" font-weight="normal" textLength="56.5" lengthAdjust="spacingAndGlyphs">MA60: 9.21</text>
<text x="397" y="16" fill="#c8c8c8" font-size="12" font-weight="normal" textLength="66" lengthAdjust="spacingAndGlyphs">MA120: 9.55</text>
<text x="469.5" y="16" fill="#0000ff" font-size="12" font-weight="normal" textLength="65" lengthAdjust="spacingAndGlyphs">MA250: 9.94</text>
<text x="922" y="33" fill="#c8c8c8" font-size="12" font-weight="normal" textLength="29" lengthAdjust="spacingAndGlyphs">10.87</text>
<text x="786" y="293" fill="#c8c8c8" font-size="12" font-weight="normal" textLength="22.5" lengthAdjust="spacingAndGlyphs">8.30</text>
<text x="18" y="317" fill="#e6e6e6" font-size="12" font-weight="normal" textLength="71" lengthAdjust="spacingAndGlyphs">个股动能强弱</text>
<text x="95.6" y="317" fill="#ffff00" font-size="12" font-weight="normal" textLength="82.4" lengthAdjust="spacingAndGlyphs">EXP5角度: 8.18</text>
<text x="184" y="317" fill="#ff00ff" font-size="12" font-weight="normal" textLength="77" lengthAdjust="spacingAndGlyphs">主力筹码: 0.95</text>
<text x="267" y="317" fill="#e6e6e6" font-size="12" font-weight="normal" textLength="65" lengthAdjust="spacingAndGlyphs">控盘线: 3.04</text>
<text x="337.5" y="317" fill="#ffff00" font-size="12" font-weight="normal" textLength="53.5" lengthAdjust="spacingAndGlyphs">力度: 6.70</text>
<text x="397" y="317" fill="#ff0000" font-size="12" font-weight="normal" textLength="60" lengthAdjust="spacingAndGlyphs">个股: 60.29</text>
<text x="462.5" y="317" fill="#40c040" font-size="12" font-weight="normal" textLength="60.5" lengthAdjust="spacingAndGlyphs">行业: 53.13</text>
<text x="528" y="317" fill="#c8c8c8" font-size="12" font-weight="normal" textLength="61" lengthAdjust="spacingAndGlyphs">大盘: 57.29</text>
<text x="595" y="317" fill="#ff00ff" font-size="12" font-weight="normal" textLength="44" lengthAdjust="spacingAndGlyphs">K: 55.39</text>
<text x="645" y="317" fill="#ffff00" font-size="12" font-weight="normal" textLength="45" lengthAdjust="spacingAndGlyphs">D: 51.34</text>
<text x="696" y="317" fill="#00ff00" font-size="12" font-weight="normal" textLength="65" lengthAdjust="spacingAndGlyphs">底背离: 0.00</text>
<text x="766.5" y="317" fill="#0000ff" font-size="12" font-weight="normal" textLength="66.5" lengthAdjust="spacingAndGlyphs">顶背离: 0.00</text>
<text x="838" y="317" fill="#909090" font-size="12" font-weight="normal" textLength="30" lengthAdjust="spacingAndGlyphs">: 0.00</text>
<text x="873" y="317" fill="#909090" font-size="12" font-weight="normal" textLength="36" lengthAdjust="spacingAndGlyphs">: 20.00</text>
<text x="915" y="317" fill="#909090" font-size="12" font-weight="normal" textLength="36" lengthAdjust="spacingAndGlyphs">: 50.00</text>
<text x="956.5" y="317" fill="#ff8080" font-size="12" font-weight="normal" textLength="37.0" lengthAdjust="spacingAndGlyphs">: 80.00</text>
<text x="999" y="317" fill="#ff8080" font-size="12" font-weight="normal" textLength="43" lengthAdjust="spacingAndGlyphs">: 100.00</text>
<text x="11.7" y="344.5" fill="#ffff00" font-size="12" font-weight="normal" textLength="72.8" lengthAdjust="spacingAndGlyphs">石油 排名：7</text>
<text x="12.2" y="363" fill="#ffff00" font-size="12" font-weight="normal" textLength="315.5" lengthAdjust="spacingAndGlyphs">◆绿色(灰色)框区域代表"短期能量风险"区域，建议离场！◆</text>
<text x="12.2" y="381.8" fill="#ffff00" font-size="12" font-weight="normal" textLength="443.5" lengthAdjust="spacingAndGlyphs">◆低位起涨前的压力位、支撑位之间的差值越小，力度越强，趋势来临时间越近！◆</text>
<text x="456" y="344.5" fill="#ffff00" font-size="12" font-weight="normal" textLength="48" lengthAdjust="spacingAndGlyphs">↖时间窗</text>
<text x="966.5" y="344.5" fill="#ffff00" font-size="12" font-weight="normal" textLength="47.5" lengthAdjust="spacingAndGlyphs">↖时间窗</text>
<text x="5.7" y="457.7" fill="#ff0000" font-size="15.5" font-weight="bold" textLength="7.2" lengthAdjust="spacingAndGlyphs">B</text>
<text x="17.5" y="459.2" fill="#00e000" font-size="15.5" font-weight="bold" textLength="7.2" lengthAdjust="spacingAndGlyphs">S</text>
<text x="62" y="457.2" fill="#ff0000" font-size="15.5" font-weight="bold" textLength="7.2" lengthAdjust="spacingAndGlyphs">B</text>
<text x="108" y="450.2" fill="#00e000" font-size="15.5" font-weight="bold" textLength="7.2" lengthAdjust="spacingAndGlyphs">S</text>
<text x="151" y="457.2" fill="#ff0000" font-size="15.5" font-weight="bold" textLength="7.2" lengthAdjust="spacingAndGlyphs">B</text>
<text x="182.5" y="459.2" fill="#00e000" font-size="15.5" font-weight="bold" textLength="7.2" lengthAdjust="spacingAndGlyphs">S</text>
<text x="227" y="453.0" fill="#ff0000" font-size="15.5" font-weight="bold" textLength="7.2" lengthAdjust="spacingAndGlyphs">B</text>
<text x="409" y="358.2" fill="#00e000" font-size="15.5" font-weight="bold" textLength="7.2" lengthAdjust="spacingAndGlyphs">S</text>
<text x="423" y="357.7" fill="#ff0000" font-size="15.5" font-weight="bold" textLength="7.2" lengthAdjust="spacingAndGlyphs">B</text>
<text x="454" y="357.7" fill="#00e000" font-size="15.5" font-weight="bold" textLength="7.2" lengthAdjust="spacingAndGlyphs">S</text>
<text x="663" y="464.4" fill="#ff0000" font-size="15.5" font-weight="bold" textLength="7.2" lengthAdjust="spacingAndGlyphs">B</text>
<text x="678.5" y="465.2" fill="#00e000" font-size="15.5" font-weight="bold" textLength="7.2" lengthAdjust="spacingAndGlyphs">S</text>
<text x="738" y="469.9" fill="#ff0000" font-size="15.5" font-weight="bold" textLength="7.2" lengthAdjust="spacingAndGlyphs">B</text>
<text x="753.6" y="471.0" fill="#00e000" font-size="15.5" font-weight="bold" textLength="7.2" lengthAdjust="spacingAndGlyphs">S</text>
<text x="798" y="474.2" fill="#ff0000" font-size="15.5" font-weight="bold" textLength="7.2" lengthAdjust="spacingAndGlyphs">B</text>
<text x="934.4" y="398.2" fill="#00e000" font-size="15.5" font-weight="bold" textLength="7.2" lengthAdjust="spacingAndGlyphs">S</text>
<text x="993" y="418.2" fill="#ff0000" font-size="15.5" font-weight="bold" textLength="7.2" lengthAdjust="spacingAndGlyphs">B</text>
<text x="156" y="448.3" fill="#ff0000" font-size="12" font-weight="normal" textLength="35" lengthAdjust="spacingAndGlyphs">底背离</text>
<text x="234" y="452" fill="#ff0000" font-size="12" font-weight="normal" textLength="31.5" lengthAdjust="spacingAndGlyphs">底背离</text>
<text x="1013" y="463.5" fill="#ff0000" font-size="12" font-weight="normal" textLength="12.5" lengthAdjust="spacingAndGlyphs">33</text>
<text x="1027" y="460.8" fill="#ff0000" font-size="12" font-weight="normal" textLength="13" lengthAdjust="spacingAndGlyphs">59</text>
<text x="1026" y="495" fill="#ffff00" font-size="12" font-weight="normal" textLength="24" lengthAdjust="spacingAndGlyphs">强突</text>
<text x="1045" y="505" fill="#e6e6e6" font-size="12" font-weight="normal" textLength="36" lengthAdjust="spacingAndGlyphs">日MAC</text>
<text x="1045" y="521" fill="#e6e6e6" font-size="12" font-weight="normal" textLength="36" lengthAdjust="spacingAndGlyphs">周MAC</text>
<text x="1045" y="537" fill="#e6e6e6" font-size="12" font-weight="normal" textLength="36" lengthAdjust="spacingAndGlyphs">月MAC</text>
<text x="1027" y="548" fill="#ff0000" font-size="12" font-weight="normal" textLength="8" lengthAdjust="spacingAndGlyphs">日</text>
<polygon points="470.5,292 473,294.5 473,295 468,295 468,294.5" fill="#ff0000"/>
<text x="467.5" y="303" fill="#ff0000" font-size="10" font-weight="bold" textLength="7" lengthAdjust="spacingAndGlyphs">S</text>
<rect x="555" y="290" width="13" height="13" fill="#0a3a78"/>
<text x="556" y="301" fill="#ffffff" font-size="11.5" font-weight="normal" textLength="11.5" lengthAdjust="spacingAndGlyphs">财</text>
</g>
</svg>
</body></html>
